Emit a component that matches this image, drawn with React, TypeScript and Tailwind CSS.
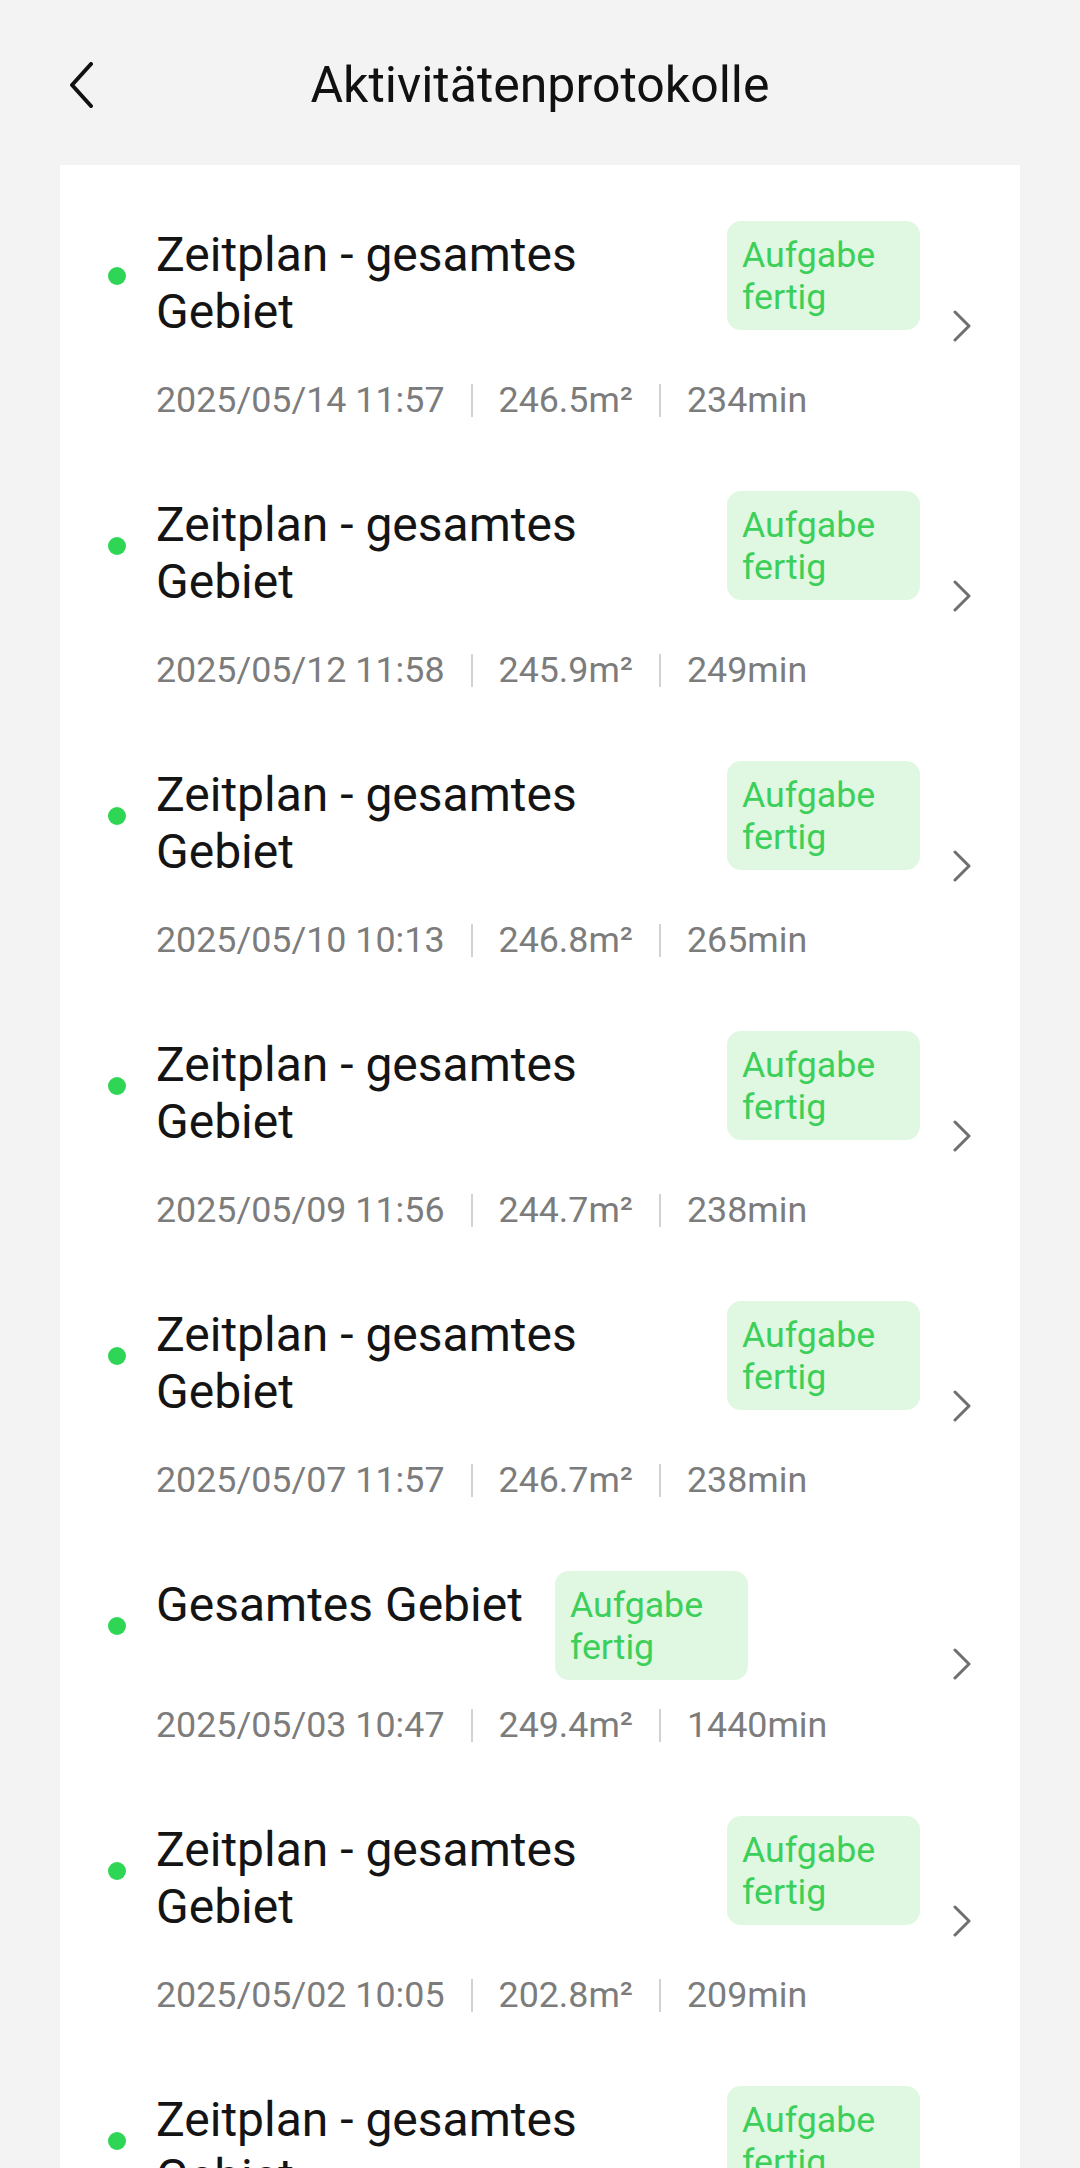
import { useMemo } from "react"

type LogEntry = {
  title: string
  date: string
  area: string
  duration: string
}

const logs: LogEntry[] = [
  { title: "Zeitplan - gesamtes Gebiet", date: "2025/05/14 11:57", area: "246.5m²", duration: "234min" },
  { title: "Zeitplan - gesamtes Gebiet", date: "2025/05/12 11:58", area: "245.9m²", duration: "249min" },
  { title: "Zeitplan - gesamtes Gebiet", date: "2025/05/10 10:13", area: "246.8m²", duration: "265min" },
  { title: "Zeitplan - gesamtes Gebiet", date: "2025/05/09 11:56", area: "244.7m²", duration: "238min" },
  { title: "Zeitplan - gesamtes Gebiet", date: "2025/05/07 11:57", area: "246.7m²", duration: "238min" },
  { title: "Gesamtes Gebiet", date: "2025/05/03 10:47", area: "249.4m²", duration: "1440min" },
  { title: "Zeitplan - gesamtes Gebiet", date: "2025/05/02 10:05", area: "202.8m²", duration: "209min" },
  { title: "Zeitplan - gesamtes Gebiet", date: "2025/04/30 11:57", area: "246.1m²", duration: "236min" },
]

function BackIcon() {
  return (
    <svg width="26" height="46" viewBox="0 0 26 46" fill="none">
      <polyline
        points="23,2 4,23 23,44"
        stroke="#111111"
        strokeWidth="4"
        strokeLinecap="round"
        strokeLinejoin="round"
      />
    </svg>
  )
}

function ChevronRight() {
  return (
    <svg width="18" height="32" viewBox="0 0 18 32" fill="none">
      <polyline
        points="2,2 16,16 2,30"
        stroke="#6f6f6f"
        strokeWidth="3"
        strokeLinecap="round"
        strokeLinejoin="round"
      />
    </svg>
  )
}

function LogRow({ entry }: { entry: LogEntry }) {
  return (
    <div className="flex items-center pb-[34px] pl-[48px] pr-[49px] pt-[36px]">
      <div className="flex h-[109px] w-[18px] shrink-0 items-center self-start">
        <span className="h-[18px] w-[18px] rounded-full bg-[#2fd655]" />
      </div>

      <div className="ml-[30px] min-w-0 flex-1">
        <div className="flex items-start">
          <div className="mb-[15px] mt-[5px] min-w-0 text-[48px] leading-[57px] text-[#141414]">
            {entry.title}
          </div>
          <div className="ml-[32px] h-[109px] w-[193px] shrink-0 rounded-[14px] bg-[#e0f8e1] pl-[15px] pt-[13px] text-[35.7px] leading-[42px] text-[#3ccf5a]">
            Aufgabe fertig
          </div>
        </div>

        <div className="mt-[24px] flex items-center text-[35.8px] leading-[42px] text-[#7c7c7c]">
          <span>{entry.date}</span>
          <span className="mx-[26px] h-[33px] w-[2px] bg-[#d2d2d2]" />
          <span>{entry.area}</span>
          <span className="mx-[26px] h-[33px] w-[2px] bg-[#d2d2d2]" />
          <span>{entry.duration}</span>
        </div>
      </div>

      <div className="ml-[33px] mt-[10px] shrink-0">
        <ChevronRight />
      </div>
    </div>
  )
}

export default function App() {
  const rows = useMemo(() => logs, [])

  return (
    <div
      className="h-[2168px] w-[1080px] overflow-hidden bg-[#f3f3f3]"
      style={{ fontFamily: "Roboto, 'Noto Sans', sans-serif" }}
    >
      <header className="grid h-[165px] grid-cols-[1fr_auto_1fr] items-start pt-[55px]">
        <div className="flex h-[60px] items-center pl-[68px]">
          <BackIcon />
        </div>
        <h1 className="text-[50px] font-normal leading-[60px] text-[#111111]">
          Aktivitätenprotokolle
        </h1>
        <div />
      </header>

      <main className="mx-[60px] bg-white pt-[20px]">
        {rows.map((entry, i) => (
          <LogRow key={i} entry={entry} />
        ))}
      </main>
    </div>
  )
}
